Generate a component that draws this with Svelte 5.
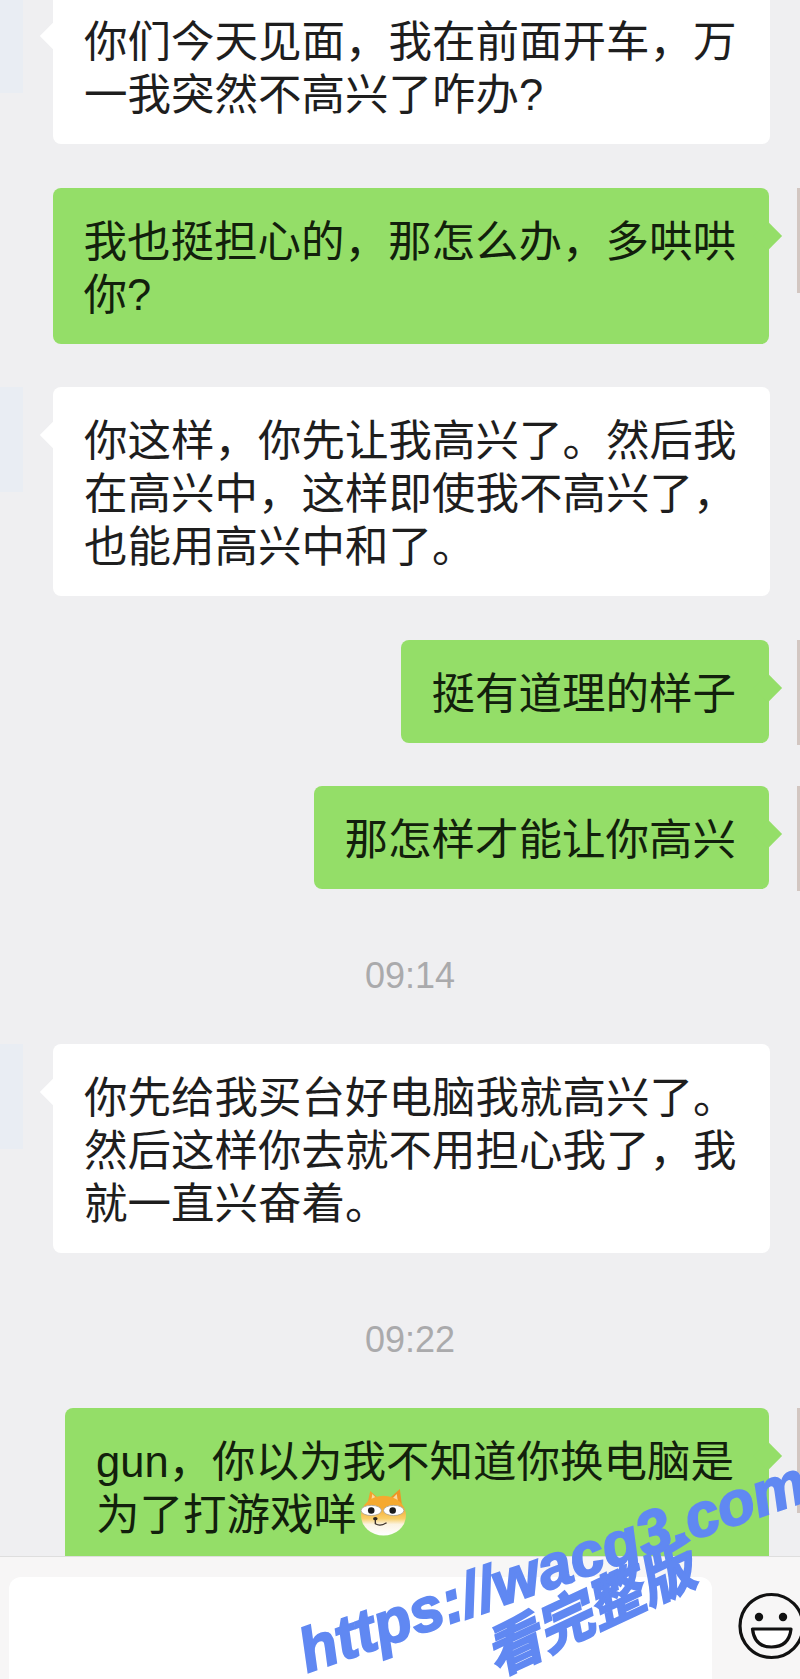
<script>
  // conversation, top to bottom; lines are broken by hand like the chat client does
  const items = [
    { side: 'left', lines: ['你们今天见面，我在前面开车，万', '一我突然不高兴了咋办?'] },
    { side: 'right', lines: ['我也挺担心的，那怎么办，多哄哄', '你?'] },
    { side: 'left', lines: ['你这样，你先让我高兴了。然后我', '在高兴中，这样即使我不高兴了，', '也能用高兴中和了。'] },
    { side: 'right', lines: ['挺有道理的样子'] },
    { side: 'right', lines: ['那怎样才能让你高兴'] },
    { time: '09:14' },
    { side: 'left', lines: ['你先给我买台好电脑我就高兴了。', '然后这样你去就不用担心我了，我', '就一直兴奋着。'] },
    { time: '09:22' },
    { side: 'right', lines: ['gun，你以为我不知道你换电脑是', '为了打游戏咩'], doge: true }
  ];
</script>

{#snippet doge()}
  <svg class="doge" viewBox="0 0 46 46" aria-hidden="true">
    <defs>
      <linearGradient id="fur" x1="0" y1="0" x2="0" y2="1">
        <stop offset="0.3" stop-color="#f5a92f" />
        <stop offset="0.58" stop-color="#f9cf6a" />
        <stop offset="0.72" stop-color="#fbf3e2" />
        <stop offset="1" stop-color="#fff" />
      </linearGradient>
    </defs>
    <path d="M7 16 L10 2 L18 9 Z" fill="#f3a02c" />
    <path d="M29 9 L39 0 L41 16 Z" fill="#ee9526" />
    <path d="M12 5 L11 12 L16 9 Z" fill="#f9d9a0" />
    <path d="M36 5 L37 12 L32 9 Z" fill="#f9d9a0" />
    <ellipse cx="23" cy="26" rx="22" ry="19.500" fill="url(#fur)" />
    <ellipse cx="11" cy="21" rx="10" ry="5" fill="#fff" stroke="#a9a394" stroke-width="0.8" />
    <ellipse cx="33" cy="21" rx="10" ry="5" fill="#fff" stroke="#a9a394" stroke-width="0.8" />
    <circle cx="11" cy="21" r="3.200" fill="#1c1c1c" />
    <circle cx="32" cy="21" r="3.200" fill="#1c1c1c" />
    <ellipse cx="15" cy="29" rx="2.200" ry="1.700" fill="#2a2420" />
    <path d="M15 30 V34 Q20 37 26 33" fill="none" stroke="#3a302a" stroke-width="1.300" />
  </svg>
{/snippet}

<div class="phone">
  <div class="messages">
    {#each items as item}
      {#if item.time}
        <div class="time">{item.time}</div>
      {:else}
        <div class="row {item.side}">
          <div class="avatar"></div>
          <div class="bubble">{#each item.lines as line, i}{#if i > 0}<br />{/if}{line}{/each}{#if item.doge}{@render doge()}{/if}</div>
        </div>
      {/if}
    {/each}
  </div>

  <div class="inputbar">
    <div class="field"></div>
    <svg class="smile" viewBox="0 0 70 70" aria-hidden="true">
      <circle cx="33.500" cy="35" r="31.500" fill="none" stroke="#111" stroke-width="3.200" />
      <circle cx="21" cy="26" r="4.200" fill="#111" />
      <circle cx="45" cy="26" r="4.200" fill="#111" />
      <path d="M14.500 38 H53 Q51 56 33.500 56 Q16.500 56 14.500 38 Z" fill="#fff" stroke="#111" stroke-width="3.200" stroke-linejoin="round" />
    </svg>
  </div>

  <div class="stamp">
    <span class="url">https://wacg3.com</span>
    <span class="more">看完整版</span>
  </div>
</div>

<style>
  :global(body) {
    margin: 0;
    background: #efeff1;
  }

  .phone {
    position: relative;
    width: 800px;
    height: 1679px;
    display: flex;
    flex-direction: column;
    overflow: hidden;
    background: #efeff1;
    font-family: "Liberation Sans", "Noto Sans CJK SC", sans-serif;
  }

  .messages {
    flex: 1;
    min-height: 0;
    margin-top: -12px;
    display: flex;
    flex-direction: column;
    gap: 43.5px;
  }

  .row {
    position: relative;
    display: flex;
  }

  .row.left {
    justify-content: flex-start;
    padding-left: 53px;
  }

  .row.right {
    justify-content: flex-end;
    padding-right: 31px;
  }

  .avatar {
    position: absolute;
    top: 0;
    width: 23px;
    height: 105px;
    background: #e9edf3;
  }

  .left .avatar {
    left: 0;
  }

  .right .avatar {
    right: 0;
    width: 3px;
    background: #d2c6c1;
  }

  .bubble {
    position: relative;
    padding: 28px 33px 22px 31px;
    border-radius: 8px;
    background: #fff;
    color: #1e1e1e;
    font-size: 43.5px;
    line-height: 53px;
    white-space: nowrap;
  }

  .row:last-child .bubble {
    min-width: 640px;
  }

  .right .bubble {
    background: #94de68;
    color: #12200c;
  }

  .bubble::before {
    content: "";
    position: absolute;
    top: 38px;
    width: 20px;
    height: 20px;
    background: inherit;
    transform: rotate(45deg);
  }

  .left .bubble::before {
    left: -9px;
  }

  .right .bubble::before {
    right: -9px;
  }

  .doge {
    width: 47px;
    height: 47px;
    margin-left: 3px;
    vertical-align: -6px;
  }

  .time {
    margin: 23.5px 0 4.5px;
    padding-left: 20px;
    text-align: center;
    color: #aaaaac;
    font-size: 36px;
    line-height: 40px;
  }

  .inputbar {
    flex: none;
    position: relative;
    height: 123px;
    padding: 20px 0 0 9px;
    box-sizing: border-box;
    display: flex;
    gap: 26px;
    background: #f7f6f6;
    border-top: 1px solid #dedede;
  }

  .field {
    flex: none;
    width: 703px;
    border-radius: 12px 12px 0 0;
    background: #fff;
  }

  .smile {
    flex: none;
    width: 70px;
    height: 70px;
    margin-top: 14px;
  }

  .stamp {
    position: absolute;
    inset: 0;
    pointer-events: none;
    color: #6088f2;
    font-style: italic;
    font-weight: 700;
    -webkit-text-stroke: 2px #6088f2;
  }

  .url,
  .more {
    position: absolute;
    white-space: nowrap;
    transform-origin: left bottom;
  }

  .url {
    left: 312px;
    top: 1616px;
    font-size: 61px;
    line-height: 70px;
    transform: rotate(-19deg);
  }

  .more {
    left: 502px;
    top: 1624px;
    font-size: 56px;
    line-height: 64px;
    transform: rotate(-25deg);
  }
</style>
